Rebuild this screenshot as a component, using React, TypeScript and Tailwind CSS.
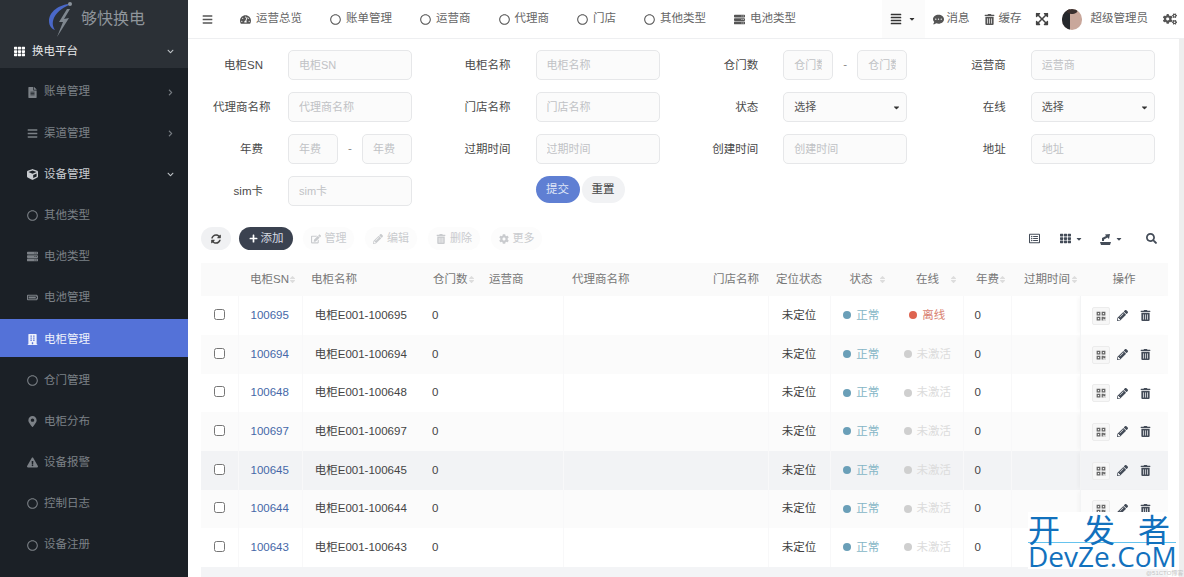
import React from "react";
import {
  FaAlignJustify, FaBars, FaBatteryFull, FaBuilding, FaCaretDown, FaChevronDown, FaChevronRight, FaCog, FaCogs, FaCommentDots, FaCube, FaEdit, FaExclamationTriangle, FaExpandArrowsAlt, FaFileAlt, FaMapMarkerAlt, FaPencilAlt, FaPlus, FaQrcode, FaRegCircle, FaRegListAlt, FaSearch, FaServer, FaSort, FaSyncAlt, FaTachometerAlt, FaTh, FaTrashAlt,
} from "react-icons/fa";

const side = [
  { t: "账单管理", I: FaFileAlt, c: "r" },
  { t: "渠道管理", I: FaBars, c: "r" },
  { t: "设备管理", I: FaCube, c: "d", on: true },
  { t: "其他类型", I: FaRegCircle },
  { t: "电池类型", I: FaServer },
  { t: "电池管理", I: FaBatteryFull },
  { t: "电柜管理", I: FaBuilding, active: true },
  { t: "仓门管理", I: FaRegCircle },
  { t: "电柜分布", I: FaMapMarkerAlt },
  { t: "设备报警", I: FaExclamationTriangle },
  { t: "控制日志", I: FaRegCircle },
  { t: "设备注册", I: FaRegCircle },
];

const topNav = [
  { t: "运营总览", I: FaTachometerAlt },
  { t: "账单管理", I: FaRegCircle },
  { t: "运营商", I: FaRegCircle },
  { t: "代理商", I: FaRegCircle },
  { t: "门店", I: FaRegCircle },
  { t: "其他类型", I: FaRegCircle },
  { t: "电池类型", I: FaServer },
];

const cols = [
  { w: 37, h: "", cls: "text-left" },
  { w: 64, h: "电柜SN", cls: "text-left pl-[12px]", sort: 9 },
  { w: 121, h: "电柜名称", cls: "text-left pl-[9px]" },
  { w: 58, h: "仓门数", cls: "text-left pl-[10px]", sort: 9 },
  { w: 82, h: "运营商", cls: "text-left pl-[8px]" },
  { w: 142, h: "代理商名称", cls: "text-left pl-[9px]" },
  { w: 63, h: "门店名称", cls: "text-left pl-[8px]" },
  { w: 62, h: "定位状态", cls: "text-center" },
  { w: 62, h: "状态", cls: "text-center", sort: 9 },
  { w: 71, h: "在线", cls: "text-center", sort: 9 },
  { w: 48, h: "年费", cls: "text-left pl-[13px]", sort: 8 },
  { w: 69, h: "过期时间", cls: "text-left pl-[13px]", sort: 5 },
  { w: 88, h: "操作", cls: "text-center" },
];

const rows = ["100695", "100694", "100648", "100697", "100645", "100644", "100643"];

function Field({ label, ph }: { label: string; ph: string }) {
  return (
    <div className="flex items-center gap-[25px]">
      <Label text={label} />
      <Box text={ph} className="w-[124px]" />
    </div>
  );
}

function Label({ text }: { text: string }) {
  return <div className="w-[50px] whitespace-nowrap pt-[1px] text-right text-[#4a4a4a]">{text}</div>;
}

function Box({ text, className }: { text: string; className: string }) {
  return (
    <div className={`flex h-[30px] items-center rounded-[5px] border border-[#e6e7e9] bg-[#fbfbfb] px-[10px] pt-[1px] text-[11px] text-[#c0c2c5] ${className}`}>
      <span className="block min-w-0 flex-1 overflow-hidden whitespace-nowrap">{text}</span>
    </div>
  );
}

function Range({ label, ph }: { label: string; ph: string }) {
  return (
    <div className="flex items-center gap-[25px]">
      <Label text={label} />
      <div className="flex w-[124px] items-center justify-between">
        <Box text={ph} className="w-[50px]" />
        <span className="text-[#888]">-</span>
        <Box text={ph} className="w-[50px]" />
      </div>
    </div>
  );
}

function Select({ label }: { label: string }) {
  return (
    <div className="flex items-center gap-[25px]">
      <Label text={label} />
      <div className="flex h-[30px] w-[124px] items-center justify-between rounded-[5px] border border-[#e6e7e9] bg-[#fbfbfb] pl-[10px] pr-[5px] pt-[1px] text-[11px] text-[#555]">
        选择
        <FaCaretDown className="text-[9px] text-[#333]" />
      </div>
    </div>
  );
}

function Disabled({ I, t, w }: { I: any; t: string; w: string }) {
  return (
    <div className={`flex h-[23px] items-center justify-center gap-[4px] rounded-full bg-[#fcfcfc] text-[11px] text-[#c9cbce] ${w}`}>
      <I className="text-[10px]" />
      {t}
    </div>
  );
}

function Logo() {
  return (
    <svg width="27" height="36" viewBox="0 0 27 36" className="shrink-0">
      <path d="M24 3 C12 3 2 11 2 20 C2 25 5 28 8 29 C5 25 5 20 8 15 C11 10 17 6 24 3Z" fill="#4a68c8" />
      <path d="M20 8 L12 21 L16 21 L10 36 L22 17 L17 18 L23 8Z" fill="#7f878f" />
      <circle cx="23" cy="3" r="2" fill="#8b939b" />
    </svg>
  );
}

function ExportIcon() {
  return (
    <svg width="11" height="12" viewBox="0 0 11 12">
      <path d="M0 9 H11 L10 12 H1Z" fill="#444c58" />
      <path d="M2 8 L2 5 L6 3 L5 1.5 L10 1 L9 6 L7.5 4.5 L4 6.5 L4 8Z" fill="#444c58" />
    </svg>
  );
}

function Status({ color, text, label }: { color: string; text: string; label: string }) {
  return (
    <span className={`inline-flex items-center gap-[5px] ${text}`}>
      <span className={`h-[8px] w-[8px] rounded-full ${color}`} />
      {label}
    </span>
  );
}

export default function App() {
  return (
    <div className="relative flex h-[577px] w-[1184px] overflow-hidden bg-white font-['Liberation_Sans','Noto_Sans_CJK_SC',sans-serif] text-[11.5px] text-[#444]">
      <aside className="flex w-[188px] shrink-0 flex-col bg-[#1b2026]">
        <div className="h-[68px] shrink-0 bg-[#2b3036]">
          <div className="flex h-[38px] items-center gap-[7px] pl-[47px]">
            <Logo />
            <span className="text-[16px] text-[#8f959b]">够快换电</span>
          </div>
          <div className="flex h-[24px] items-center pl-[14px] pr-[14px] pt-[3px] text-[#e4e6e8]">
            <FaTh className="text-[11px] text-white" />
            <span className="ml-[7px] flex-1">换电平台</span>
            <FaChevronDown className="text-[7px] text-[#c0c4c8]" />
          </div>
        </div>
        <nav className="flex flex-col gap-[3.2px] pt-[4px]">
          {side.map(({ t, I, c, on, active }) => (
            <div key={t} className={`flex h-[38px] items-center pl-[26px] pr-[14px] pt-[2px] ${active ? "bg-[#5472d8] text-[#eef1fb]" : on ? "text-[#c9ccd0]" : "text-[#7c8187]"}`}>
              <span className="flex w-[12px] justify-center"><I className="text-[11px]" /></span>
              <span className="ml-[6px] flex-1">{t}</span>
              {c === "r" && <FaChevronRight className="text-[7px] text-[#777c82]" />}
              {c === "d" && <FaChevronDown className="text-[7px] text-[#c0c4c8]" />}
            </div>
          ))}
        </nav>
      </aside>

      <main className="flex min-w-0 flex-1 flex-col">
        <header className="flex h-[39px] shrink-0 items-center border-b border-[#eeeff1] pl-[14px] pr-[7px] text-[#666]">
          <FaBars className="text-[11px] text-[#555]" />
          <div className="ml-[27px] flex items-center gap-[28px]">
            {topNav.map(({ t, I }) => (
              <div key={t} className="flex items-center gap-[5px]">
                <I className="w-[11px] text-[11px] text-[#555]" />
                {t}
              </div>
            ))}
          </div>
          <div className="ml-auto flex h-[38px] w-[43px] items-center justify-center gap-[6px] bg-[#fbfbfb] text-[#333]">
            <FaAlignJustify className="text-[12px]" />
            <FaCaretDown className="text-[8px]" />
          </div>
          <div className="ml-[8px] flex items-center gap-[3px]"><FaCommentDots className="text-[11px] text-[#555]" />消息</div>
          <div className="ml-[14px] flex items-center gap-[4px]"><FaTrashAlt className="text-[11px] text-[#555]" />缓存</div>
          <FaExpandArrowsAlt className="ml-[13px] text-[14px] text-[#444]" />
          <div className="relative ml-[13px] h-[21px] w-[20px] overflow-hidden rounded-full bg-[#c9a79b]">
            <div className="absolute left-0 top-0 h-[21px] w-[8px] bg-[#25282c]" />
            <div className="absolute left-[4px] top-0 h-[5px] w-[12px] rounded-b-full bg-[#3a2f2e]" />
          </div>
          <span className="ml-[9px]">超级管理员</span>
          <FaCogs className="ml-[15px] text-[14px] text-[#555]" />
        </header>

        <div className="flex min-h-0 flex-1">
          <div className="min-w-0 flex-1">
            <section className="grid grid-cols-[repeat(4,199px)] gap-x-[48.6px] gap-y-[12px] pl-[25px] pt-[11px]">
              <Field label="电柜SN" ph="电柜SN" />
              <Field label="电柜名称" ph="电柜名称" />
              <Range label="仓门数" ph="仓门数" />
              <Field label="运营商" ph="运营商" />
              <Field label="代理商名称" ph="代理商名称" />
              <Field label="门店名称" ph="门店名称" />
              <Select label="状态" />
              <Select label="在线" />
              <Range label="年费" ph="年费" />
              <Field label="过期时间" ph="过期时间" />
              <Field label="创建时间" ph="创建时间" />
              <Field label="地址" ph="地址" />
              <Field label="sim卡" ph="sim卡" />
              <div className="flex h-[28px] items-start gap-[2px] pl-[75px]">
                <div className="flex h-[27px] w-[44px] items-center justify-center rounded-full bg-[#5f7fd3] text-[#dfe6f7]">提交</div>
                <div className="flex h-[27px] w-[43px] items-center justify-center rounded-full bg-[#f1f2f4] text-[#444]">重置</div>
              </div>
            </section>

            <div className="mt-[21px] flex h-[23px] items-center pl-[13px] pr-[22px]">
              <div className="flex h-[23px] w-[30px] items-center justify-center rounded-full bg-[#f0f1f3]"><FaSyncAlt className="text-[10px] text-[#444]" /></div>
              <div className="ml-[8px] flex h-[23px] w-[54px] items-center justify-center gap-[3px] rounded-full bg-[#3b4250] text-[#d7dbe3]"><FaPlus className="text-[9px] text-white" />添加</div>
              <div className="ml-[10px] flex gap-[11px]">
                <Disabled I={FaEdit} t="管理" w="w-[51px]" />
                <Disabled I={FaPencilAlt} t="编辑" w="w-[52px]" />
                <Disabled I={FaTrashAlt} t="删除" w="w-[52px]" />
                <Disabled I={FaCog} t="更多" w="w-[51px]" />
              </div>
              <div className="ml-auto flex items-center text-[#444c58]">
                <FaRegListAlt className="text-[11px]" />
                <FaTh className="ml-[20px] text-[11px]" />
                <FaCaretDown className="ml-[4px] text-[8px]" />
                <span className="ml-[17px]"><ExportIcon /></span>
                <FaCaretDown className="ml-[4px] text-[8px]" />
                <FaSearch className="ml-[23px] text-[11px]" />
              </div>
            </div>

            <div className="ml-[13px] mt-[13px] w-[967px]">
              <table className="w-[967px] table-fixed border-collapse">
                <colgroup>
                  {cols.map((c, i) => <col key={i} style={{ width: c.w }} />)}
                </colgroup>
                <thead>
                  <tr className="h-[33px] bg-[#fafafa] text-[#777]">
                    {cols.map((c, i) => (
                      <th key={i} className={`relative whitespace-nowrap p-0 font-normal ${c.cls}`}>
                        {c.h}
                        {c.sort && <FaSort className="absolute top-[12px] text-[9px] text-[#ddd]" style={{ right: c.sort - 4 }} />}
                      </th>
                    ))}
                  </tr>
                </thead>
                <tbody>
                  {rows.map((sn, r) => (
                    <tr key={sn} className={`${r === 2 || r === 5 ? "h-[38px]" : "h-[39px]"} ${r === 4 ? "bg-[#f2f3f5]" : r % 2 === 1 ? "bg-[#fbfbfb]" : "bg-white"}`}>
                      <td className="p-0"><input type="checkbox" className="mx-auto mb-[3px] block h-[11px] w-[11px]" readOnly /></td>
                      <td className="border-l border-[#f8f8f9] pl-[12px] text-[#4568a8]">{sn}</td>
                      <td className="whitespace-nowrap border-l border-[#f8f8f9] pr-[4px] text-center">电柜E001-{sn}</td>
                      <td className="pl-[9px]">0</td>
                      <td />
                      <td className="border-l border-[#f8f8f9]" />
                      <td />
                      <td className="border-l border-[#f8f8f9] text-center">未定位</td>
                      <td className="border-l border-[#f8f8f9] text-center">
                        <Status color="bg-[#6a9fb8]" text="text-[#86b6c6]" label="正常" />
                      </td>
                      <td className="whitespace-nowrap text-center">
                        {r === 0
                          ? <Status color="bg-[#de6450]" text="text-[#d98271]" label="离线" />
                          : <Status color="bg-[#cfcfcf]" text="text-[#dcdcdc]" label="未激活" />}
                      </td>
                      <td className="border-l border-[#f8f8f9] pl-[11px]">0</td>
                      <td className="border-l border-[#f8f8f9]" />
                      <td className="border-l border-[#f3f4f5] shadow-[-3px_0_4px_-1px_rgba(0,0,0,0.03)]">
                        <div className="flex items-center pl-[11px] text-[#444c58]">
                          <span className="flex h-[18px] w-[18px] items-center justify-center rounded-[2px] border border-[#ececec] bg-[#f7f7f7]"><FaQrcode className="text-[10px] text-[#666]" /></span>
                          <FaPencilAlt className="ml-[7px] text-[11px]" />
                          <FaTrashAlt className="ml-[12px] text-[11px]" />
                        </div>
                      </td>
                    </tr>
                  ))}
                </tbody>
              </table>
              <div className="h-[12px] bg-[#f3f4f6]" />
            </div>
          </div>
          <div className="w-[5px] shrink-0 bg-[#eeeeee]" />
        </div>
      </main>

      <div className="absolute left-[1028px] top-[512px] h-[57px] w-[148px] overflow-hidden bg-white text-[#1271bd]">
        <div className="h-[30px] whitespace-nowrap font-['Noto_Sans_CJK_SC',sans-serif] text-[32px] leading-[32px] tracking-[23px]">开发者</div>
        <div className="h-px bg-[#66c3ee]" />
        <div className="whitespace-nowrap font-['Open_Sans',sans-serif] text-[28px] leading-[26px]">DevZe.CoM</div>
      </div>
      <div className="absolute left-[1146px] top-[569px] text-[6px] leading-[8px] text-[#c4c4c4]">@51CTO博客</div>
    </div>
  );
}
